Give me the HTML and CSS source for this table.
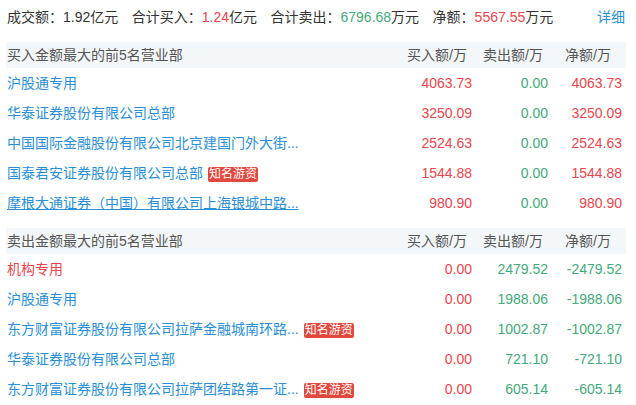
FILE: index.html
```html
<!DOCTYPE html>
<html lang="zh-CN">
<head>
<meta charset="utf-8">
<link rel="stylesheet" href="styles.css">
</head>
<body>
<div class="wrap">
  <div class="topbar">
    <div class="stats">
      <span class="stat">成交额：<span class="dark">1.92</span>亿元</span>
      <span class="stat">合计买入：<span class="red">1.24</span>亿元</span>
      <span class="stat">合计卖出：<span class="green">6796.68</span>万元</span>
      <span class="stat">净额：<span class="red">5567.55</span>万元</span>
    </div>
    <a class="detail">详细</a>
  </div>

  <div class="table">
    <div class="row head">
      <div class="name">买入金额最大的前5名营业部</div>
      <div class="num h-buy">买入额/万</div>
      <div class="num h-sell">卖出额/万</div>
      <div class="num h-net">净额/万</div>
    </div>
    <div class="row">
      <div class="name"><a class="link">沪股通专用</a></div>
      <div class="num red">4063.73</div>
      <div class="num green">0.00</div>
      <div class="num red">4063.73</div>
    </div>
    <div class="row">
      <div class="name"><a class="link">华泰证券股份有限公司总部</a></div>
      <div class="num red">3250.09</div>
      <div class="num green">0.00</div>
      <div class="num red">3250.09</div>
    </div>
    <div class="row">
      <div class="name"><a class="link">中国国际金融股份有限公司北京建国门外大街...</a></div>
      <div class="num red">2524.63</div>
      <div class="num green">0.00</div>
      <div class="num red">2524.63</div>
    </div>
    <div class="row">
      <div class="name"><a class="link">国泰君安证券股份有限公司总部</a><span class="tag">知名游资</span></div>
      <div class="num red">1544.88</div>
      <div class="num green">0.00</div>
      <div class="num red">1544.88</div>
    </div>
    <div class="row">
      <div class="name"><a class="link hover">摩根大通证券（中国）有限公司上海银城中路...</a></div>
      <div class="num red">980.90</div>
      <div class="num green">0.00</div>
      <div class="num red">980.90</div>
    </div>
  </div>

  <div class="table second">
    <div class="row head">
      <div class="name">卖出金额最大的前5名营业部</div>
      <div class="num h-buy">买入额/万</div>
      <div class="num h-sell">卖出额/万</div>
      <div class="num h-net">净额/万</div>
    </div>
    <div class="row">
      <div class="name"><a class="link inst">机构专用</a></div>
      <div class="num red">0.00</div>
      <div class="num green">2479.52</div>
      <div class="num green">-2479.52</div>
    </div>
    <div class="row">
      <div class="name"><a class="link">沪股通专用</a></div>
      <div class="num red">0.00</div>
      <div class="num green">1988.06</div>
      <div class="num green">-1988.06</div>
    </div>
    <div class="row">
      <div class="name"><a class="link">东方财富证券股份有限公司拉萨金融城南环路...</a><span class="tag">知名游资</span></div>
      <div class="num red">0.00</div>
      <div class="num green">1002.87</div>
      <div class="num green">-1002.87</div>
    </div>
    <div class="row">
      <div class="name"><a class="link">华泰证券股份有限公司总部</a></div>
      <div class="num red">0.00</div>
      <div class="num green">721.10</div>
      <div class="num green">-721.10</div>
    </div>
    <div class="row">
      <div class="name"><a class="link">东方财富证券股份有限公司拉萨团结路第一证...</a><span class="tag">知名游资</span></div>
      <div class="num red">0.00</div>
      <div class="num green">605.14</div>
      <div class="num green">-605.14</div>
    </div>
  </div>
</div>
</body>
</html>
```

FILE: styles.css
```css
* { box-sizing: border-box; }
html, body {
  margin: 0;
  padding: 0;
  background: #ffffff;
}
body {
  font-family: "Liberation Sans", "Noto Sans CJK SC", sans-serif;
  font-size: 14px;
  color: #333333;
}
.wrap {
  padding: 0 10px 0 6px;
}
.topbar {
  display: flex;
  align-items: center;
  justify-content: space-between;
  height: 34px;
  line-height: 34px;
  margin-bottom: 8px;
  padding-left: 1px;
  padding-right: 1px;
}
.stats {
  display: flex;
  gap: 13.5px;
}
.dark { color: #333333; }
.red { color: #e8464e; }
.green { color: #44a97b; }
.detail {
  color: #2a8fd4;
  cursor: pointer;
}
.table.second {
  margin-top: 10px;
}
.row {
  display: grid;
  grid-template-columns: 1fr 80px 76px 74px;
  height: 30px;
  line-height: 30px;
}
.row.head {
  height: 26px;
  line-height: 26px;
  background: #f4f7fa;
  color: #555555;
}
.name {
  display: flex;
  align-items: center;
  gap: 5px;
  padding-left: 1px;
  white-space: nowrap;
  overflow: hidden;
}
.num {
  text-align: right;
  padding-right: 4px;
  white-space: nowrap;
}
.head .h-buy, .head .h-sell { padding-right: 9px; }
.head .h-net { padding-right: 15px; }
.link {
  color: #2a8fd4;
  cursor: pointer;
}
.link.inst { color: #e8464e; }
.link.hover {
  text-decoration: underline;
}
.tag {
  display: inline-block;
  background: #e2483d;
  color: #ffffff;
  font-size: 12px;
  line-height: 15px;
  height: 15px;
  padding: 0 1px;
  border-radius: 2px;
  margin-top: 3px;
}
```
